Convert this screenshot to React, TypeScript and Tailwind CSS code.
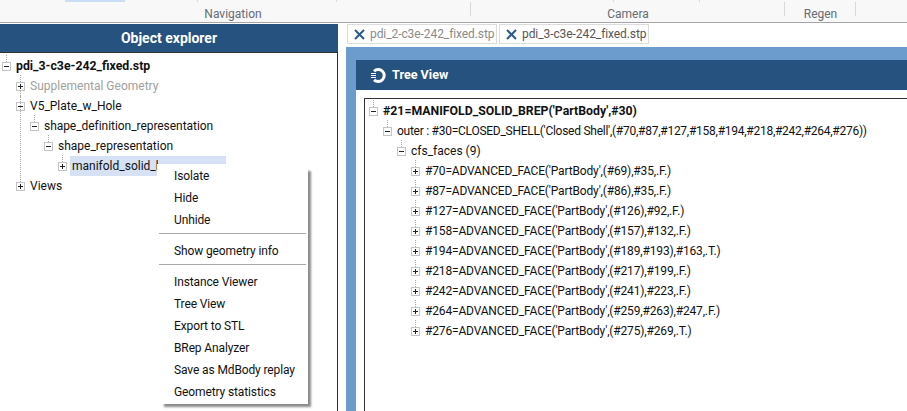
const FONT = "font-['Roboto','Noto_Sans',sans-serif]";

type TreeRow = { label: string; level: number; open: boolean; up?: number; cls?: string; selected?: boolean };

const leftRows: TreeRow[] = [
  { label: "pdi_3-c3e-242_fixed.stp", level: 0, open: true, up: 7, cls: "text-[12.3px] font-bold" },
  { label: "Supplemental Geometry", level: 1, open: false, up: 7, cls: "text-[#a0a0a0]" },
  { label: "V5_Plate_w_Hole", level: 1, open: true, up: 12 },
  { label: "shape_definition_representation", level: 2, open: true, up: 7, cls: "tracking-[-0.05px]" },
  { label: "shape_representation", level: 3, open: true, up: 7 },
  { label: "manifold_solid_b", level: 4, open: false, up: 7, selected: true },
  { label: "Views", level: 1, open: false, up: 86 },
];

const faces = [
  "#70=ADVANCED_FACE('PartBody',(#69),#35,.F.)",
  "#87=ADVANCED_FACE('PartBody',(#86),#35,.F.)",
  "#127=ADVANCED_FACE('PartBody',(#126),#92,.F.)",
  "#158=ADVANCED_FACE('PartBody',(#157),#132,.F.)",
  "#194=ADVANCED_FACE('PartBody',(#189,#193),#163,.T.)",
  "#218=ADVANCED_FACE('PartBody',(#217),#199,.F.)",
  "#242=ADVANCED_FACE('PartBody',(#241),#223,.F.)",
  "#264=ADVANCED_FACE('PartBody',(#259,#263),#247,.F.)",
  "#276=ADVANCED_FACE('PartBody',(#275),#269,.T.)",
];

const rightRows: TreeRow[] = [
  { label: "#21=MANIFOLD_SOLID_BREP('PartBody',#30)", level: 0, open: true, up: 7, cls: "text-[12.3px] font-bold" },
  { label: "outer : #30=CLOSED_SHELL('Closed Shell',(#70,#87,#127,#158,#194,#218,#242,#264,#276))", level: 1, open: true, up: 7, cls: "tracking-[-0.26px]" },
  { label: "cfs_faces (9)", level: 2, open: true, up: 7 },
  ...faces.map((label) => ({ label, level: 3, open: false, up: 7, cls: "tracking-[-0.16px]" })),
];

function Expander({ open, up }: { open: boolean; up: number }) {
  return (
    <span className="relative flex h-[9px] w-[9px] shrink-0 items-center justify-center border border-[#c4c4c4] bg-white">
      <span
        className="absolute bottom-[8px] left-[3px] border-l border-dotted border-[#a8a8a8]"
        style={{ height: up }}
      />
      <span className="absolute h-px w-[5px] bg-[#222]" />
      {!open && <span className="absolute h-[5px] w-px bg-[#222]" />}
    </span>
  );
}

function Tree({ rows }: { rows: TreeRow[] }) {
  return (
    <div className="flex flex-col">
      {rows.map((r) => (
        <div key={r.label} className="flex h-5 items-center" style={{ paddingLeft: r.level * 14 }}>
          <Expander open={r.open} up={r.up ?? 7} />
          {r.selected ? (
            <>
              <span className="ml-[3px] h-5 w-[88px] overflow-hidden whitespace-nowrap bg-[#d6e2f3] px-[2px] leading-5">
                {r.label}
              </span>
              <span className="h-[9px] w-[68px] self-start bg-[#d6e2f3]" />
            </>
          ) : (
            <span className={`ml-[3px] whitespace-nowrap px-[2px] leading-5 ${r.cls ?? ""}`}>{r.label}</span>
          )}
        </div>
      ))}
    </div>
  );
}

function CloseIcon() {
  return (
    <svg width="11" height="11" viewBox="0 0 11 11" className="shrink-0">
      <path d="M1 1 L10 10 M10 1 L1 10" stroke="#2b5a8a" strokeWidth="2" />
    </svg>
  );
}

function Tab({ label, active }: { label: string; active?: boolean }) {
  return (
    <div
      className={`flex h-[20px] w-[150px] items-center gap-[5px] border border-[#dcdcdc] pl-[6px] tracking-[-0.08px] ${
        active ? "text-[#555]" : "text-[#8a8a8a]"
      }`}
    >
      <CloseIcon />
      <span className="whitespace-nowrap">{label}</span>
    </div>
  );
}

function RibbonGroup({ label, width, cls }: { label: string; width: string; cls?: string }) {
  return (
    <div className={`relative flex h-[20px] shrink-0 items-end justify-center leading-4 text-[#666b75] ${width} ${cls ?? ""}`}>
      <span className="absolute right-0 top-0 h-[14px] w-px bg-[#d8d8d8]" />
      {label}
    </div>
  );
}

const menuGroups = [
  ["Isolate", "Hide", "Unhide"],
  ["Show geometry info"],
  ["Instance Viewer", "Tree View", "Export to STL", "BRep Analyzer", "Save as MdBody replay", "Geometry statistics"],
];

function ContextMenu() {
  return (
    <div className="absolute left-[157px] top-[164px] w-[151px] bg-white py-[1px] tracking-[-0.12px] shadow-[5px_5px_2px_-2px_rgba(0,0,0,0.45)]">
      {menuGroups.map((group, i) => (
        <div key={i}>
          {i > 0 && <div className="mx-[2px] mb-[6px] mt-[2px] h-px bg-[#a8a8a8]" />}
          <div className="flex flex-col">
            {group.map((item) => (
              <div key={item} className="flex h-[22px] items-center whitespace-nowrap pl-[17px]">
                {item}
              </div>
            ))}
          </div>
        </div>
      ))}
    </div>
  );
}

export default function App() {
  return (
    <div className={`relative flex h-[411px] w-[907px] flex-col overflow-hidden bg-white text-[12px] text-[#111] ${FONT}`}>
      <div className="h-[23px] shrink-0 border-b border-[#a6a6a6] bg-[#f8f8f8]">
        <div className="flex h-[2px]">
          <span className="ml-[65px] w-[60px] bg-[#c9def5]" />
          <span className="ml-[72px] w-px bg-[#d8d8d8]" />
          <span className="ml-[138px] w-px bg-[#d8d8d8]" />
          <span className="ml-[276px] w-px bg-[#d8d8d8]" />
          <span className="ml-[85px] w-px bg-[#d8d8d8]" />
        </div>
        <div className="flex">
          <RibbonGroup label="Navigation" width="w-[471px]" cls="pr-[5px]" />
          <RibbonGroup label="Camera" width="w-[314px]" />
          <RibbonGroup label="Regen" width="w-[71px]" />
        </div>
      </div>
      <div className="flex min-h-0 flex-1 pt-px">
        <div className="flex w-[338px] shrink-0 flex-col">
          <div className="flex h-[28px] shrink-0 items-center justify-center bg-[#25527f] text-[14px] font-bold text-white">
            Object explorer
          </div>
          <div className="flex-1 border-r border-t border-[#333] pl-[2px] pt-[3px]">
            <Tree rows={leftRows} />
          </div>
        </div>
        <div className="flex min-w-0 flex-1 flex-col pl-[8px]">
          <div className="flex h-[23px] shrink-0 gap-[2px] pl-px">
            <Tab label="pdi_2-c3e-242_fixed.stp" />
            <Tab label="pdi_3-c3e-242_fixed.stp" active />
          </div>
          <div className="min-h-0 flex-1 bg-[#6c9bce] pl-[10px] pt-[13px]">
            <div className="flex h-full flex-col bg-white">
              <div className="flex h-[30px] shrink-0 items-center gap-[6px] bg-[#25527f] pl-[15px] text-[12.6px] font-bold text-white">
                <svg width="15" height="15" viewBox="0 0 15 15">
                  <path d="M3 3.2 A6 6 0 1 1 3 11.8" fill="none" stroke="#fff" strokeWidth="3" />
                  <path d="M0 5.5 H5 M0 7.5 H5 M0 9.5 H5" stroke="#fff" strokeWidth="1" />
                </svg>
                Tree View
              </div>
              <div className="ml-[8px] mt-[8px] flex-1 border-l border-t border-[#333] pl-[4px] pt-[2px]">
                <Tree rows={rightRows} />
              </div>
            </div>
          </div>
        </div>
      </div>
      <ContextMenu />
    </div>
  );
}
